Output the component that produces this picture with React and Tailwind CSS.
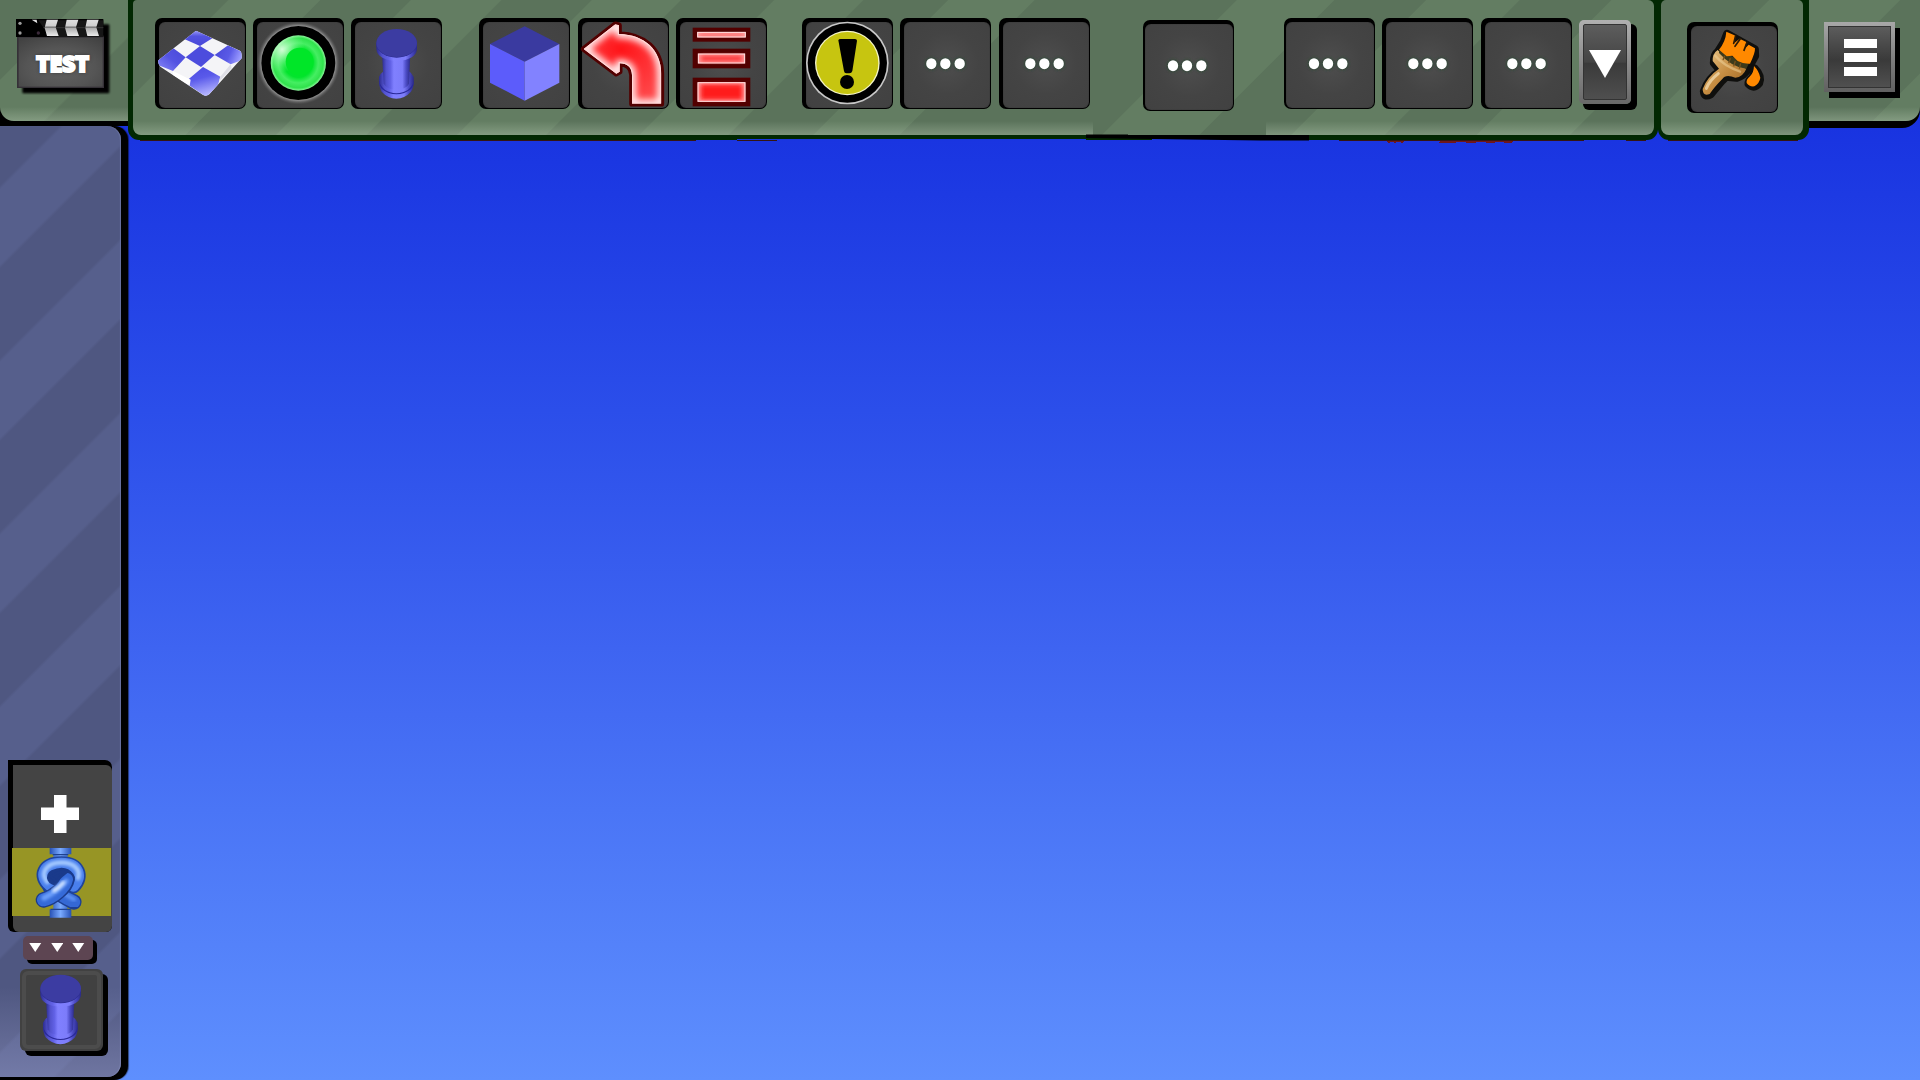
import React from "react";

function Tile({ children, thin = false, className = "" }) {
  return (
    <div
      className={`relative h-[91px] w-[91px] shrink-0 rounded-[7px] bg-black pr-px pb-px pt-[4px] ${thin ? "pl-[2px]" : "pl-[4px]"} ${className}`}
    >
      <div className="h-full w-full rounded-[6px] bg-[radial-gradient(circle_at_50%_48%,#4e4e4e_0%,#444_50%,#414141_100%)] shadow-[inset_0_0_1px_#222]" />
      <div className="absolute inset-0">{children}</div>
    </div>
  );
}

function Dots({ shift = 0 }) {
  return (
    <svg viewBox="0 0 273 273" className="h-full w-full">
      <defs>
        <filter id="dotGlow" x="-50%" y="-50%" width="200%" height="200%">
          <feGaussianBlur stdDeviation="4" />
        </filter>
      </defs>
      <g transform={`translate(${shift} 0)`}>
        <g fill="#2c4a35" filter="url(#dotGlow)">
          <circle cx="94" cy="137" r="18" />
          <circle cx="136" cy="137" r="18" />
          <circle cx="179" cy="137" r="18" />
        </g>
        <g fill="#fff">
          <ellipse cx="94" cy="137" rx="15.5" ry="16.5" />
          <ellipse cx="136" cy="137" rx="15.5" ry="16.5" />
          <ellipse cx="179" cy="137" rx="15.5" ry="16.5" />
        </g>
      </g>
    </svg>
  );
}

function Checker() {
  return (
    <svg viewBox="465 55 273 273" className="h-full w-full">
      <defs>
        <clipPath id="checkerClip">
          <path d="M588 93 L720 153 Q726 157 725 176 L628 284 Q618 292 608 285 L481 201 Q473 193 475 182 Z" />
        </clipPath>
        <linearGradient id="chFront" x1="0" y1="0" x2="0.3" y2="1">
          <stop offset="0" stopColor="#4a4ae0" />
          <stop offset="0.45" stopColor="#5a5aea" />
          <stop offset="1" stopColor="#b4b4ff" />
        </linearGradient>
        <linearGradient id="chLeft" x1="0" y1="1" x2="1" y2="0">
          <stop offset="0" stopColor="#8c8cfa" />
          <stop offset="0.5" stopColor="#5454e2" />
          <stop offset="1" stopColor="#4848d8" />
        </linearGradient>
        <linearGradient id="chRight" x1="0" y1="0" x2="1" y2="0.3">
          <stop offset="0" stopColor="#4848d8" />
          <stop offset="0.6" stopColor="#5a5ae6" />
          <stop offset="1" stopColor="#9c9cff" />
        </linearGradient>
        <linearGradient id="chTop" x1="0" y1="1" x2="0" y2="0">
          <stop offset="0" stopColor="#4848d8" />
          <stop offset="0.6" stopColor="#5353e0" />
          <stop offset="1" stopColor="#a4a4fb" />
        </linearGradient>
      </defs>
      <g clipPath="url(#checkerClip)">
        <rect x="465" y="85" width="270" height="210" fill="#f4f4f7" />
        <path d="M588 90 L637 116 L600 139 L551 117Z" fill="url(#chTop)" />
        <path d="M600 139 L644 166 L603 202 L557 173Z" fill="#4c4cdd" />
        <path d="M684 137 L730 158 L726 181 L692 194 L644 166Z" fill="url(#chRight)" />
        <path d="M516 143 L557 173 L519 214 L470 194 L473 182Z" fill="url(#chLeft)" />
        <path d="M609 202 L661 231 L652 262 L618 292 L563 254 L569 236Z" fill="url(#chFront)" />
        <path d="M519 214 L572 240 L569 258 L518 226Z" fill="#fff" />
        <path d="M661 231 L692 194 L695 206 L657 246Z" fill="#dedee6" />
      </g>
    </svg>
  );
}

function GreenBall() {
  return (
    <svg viewBox="760 55 273 273" className="h-full w-full">
      <defs>
        <radialGradient id="ballHalo">
          <stop offset="0.86" stopColor="#b5b5b5" />
          <stop offset="0.91" stopColor="#8d8d8d" stopOpacity="0.75" />
          <stop offset="1" stopColor="#555" stopOpacity="0" />
        </radialGradient>
        <radialGradient id="ball" cx="0.5" cy="0.5" r="0.5">
          <stop offset="0" stopColor="#00e52c" />
          <stop offset="0.52" stopColor="#02e42c" />
          <stop offset="0.72" stopColor="#45ee62" />
          <stop offset="0.9" stopColor="#30e24c" />
          <stop offset="1" stopColor="#8df59c" />
        </radialGradient>
        <radialGradient id="ballShine" cx="0.2" cy="0.25" r="0.42">
          <stop offset="0" stopColor="#e4ffe6" stopOpacity="0.9" />
          <stop offset="1" stopColor="#8fffa0" stopOpacity="0" />
        </radialGradient>
      </defs>
      <circle cx="896" cy="190" r="125" fill="url(#ballHalo)" />
      <circle cx="896" cy="190" r="111" fill="#000" />
      <circle cx="896" cy="190" r="83" fill="url(#ball)" />
      <circle cx="896" cy="190" r="82" fill="url(#ballShine)" />
      <circle cx="900" cy="186" r="42" fill="#00e628" />
    </svg>
  );
}

function Bumper({ box }) {
  return (
    <svg viewBox={box} className="h-full w-full">
      <defs>
        <linearGradient id="bumpBody" x1="0" x2="1">
          <stop offset="0" stopColor="#2c2c8e" />
          <stop offset="0.15" stopColor="#5252ce" />
          <stop offset="0.3" stopColor="#6262e6" />
          <stop offset="0.42" stopColor="#8080ff" />
          <stop offset="0.72" stopColor="#7c7cfa" />
          <stop offset="0.85" stopColor="#4c4cc6" />
          <stop offset="1" stopColor="#2a2a88" />
        </linearGradient>
      </defs>
      <path d="M1139 232 Q1137 260 1147 276 Q1165 296 1191 297 Q1217 296 1235 276 Q1246 260 1243 232 Q1236 218 1228 214 L1154 214 Q1144 220 1139 232Z" fill="url(#bumpBody)" />
      <path d="M1139 244 Q1150 279 1191 281 Q1233 279 1244 244 Q1242 262 1234 269 Q1216 284 1191 284 Q1166 284 1149 269 Q1141 262 1139 244Z" fill="#29299a" />
      <path d="M1148 160 H1233 L1229 252 Q1222 268 1191 270 Q1160 268 1153 252Z" fill="url(#bumpBody)" />
      <path d="M1131 130 V148 Q1134 181 1192 184 Q1250 181 1253 148 V130Z" fill="url(#bumpBody)" />
      <ellipse cx="1192" cy="132" rx="61" ry="42" fill="#2d2d92" />
      <ellipse cx="1192" cy="130" rx="61" ry="42" fill="#3c3ca2" />
    </svg>
  );
}

function Cube() {
  return (
    <svg viewBox="90 55 273 273" className="h-full w-full">
      <path d="M227 80 L331 133 L227 186 L123 133Z" fill="#3a3aa0" />
      <path d="M123 133 L227 186 V303 L123 249Z" fill="#5c5cfb" />
      <path d="M331 133 L227 186 V303 L331 249Z" fill="#8282ff" />
    </svg>
  );
}

function TurnArrow() {
  const d = "M402 148 L497 74 L508 77 V103 C585 105 634 150 635 222 V312 H547 V226 C546 202 533 192 510 191 V216 L500 222 Z";
  return (
    <svg viewBox="385 55 273 273" className="h-full w-full overflow-visible">
      <defs>
        <clipPath id="arrowClip"><path d={d} /></clipPath>
        <filter id="arrowBlur" x="-20%" y="-20%" width="140%" height="140%">
          <feGaussianBlur stdDeviation="11" />
        </filter>
        <radialGradient id="arrowRed" gradientUnits="userSpaceOnUse" cx="515" cy="150" r="190">
          <stop offset="0" stopColor="#ff1418" />
          <stop offset="0.45" stopColor="#ff3034" />
          <stop offset="1" stopColor="#ff5052" />
        </radialGradient>
      </defs>
      <path d={d} fill="#520000" stroke="#520000" strokeWidth="17" strokeLinejoin="round" />
      <g clipPath="url(#arrowClip)">
        <path d={d} fill="url(#arrowRed)" />
        <path d={d} fill="none" stroke="#fff" strokeWidth="22" filter="url(#arrowBlur)" />
        <path d={d} fill="none" stroke="#ffd9d9" strokeWidth="6" />
      </g>
    </svg>
  );
}

function RedBars() {
  const bars = [
    [730, 84, 173, 42, 14, "#ff4c4e"],
    [730, 147, 173, 59, 16, "#ff3034"],
    [730, 234, 173, 86, 15, "#ff1a1e"],
  ];
  return (
    <svg viewBox="680 55 273 273" className="h-full w-full">
      <defs>
        <filter id="barBlur" x="-10%" y="-60%" width="120%" height="220%">
          <feGaussianBlur stdDeviation="6" />
        </filter>
      </defs>
      {bars.map(([x, y, w, h, p, c], i) => (
        <g key={i}>
          <rect x={x} y={y} width={w} height={h} fill="#520000" />
          <rect x={x + p} y={y + p - 1} width={w - 2 * p} height={h - 2 * p + 2} fill="#ff9c9c" />
          <rect x={x + p + 9} y={y + p + 5} width={w - 2 * p - 18} height={Math.max(6, h - 2 * p - 10)} fill={c} filter="url(#barBlur)" />
          <rect x={x + p + 1} y={y + p} width={w - 2 * p - 2} height={h - 2 * p} fill="none" stroke="#ffe1e1" strokeWidth="3" />
        </g>
      ))}
    </svg>
  );
}

function Alert() {
  return (
    <svg viewBox="1058 55 273 273" className="h-full w-full">
      <circle cx="1194" cy="190" r="124" fill="#c8c8c8" />
      <circle cx="1194" cy="190" r="119" fill="#000" />
      <circle cx="1194" cy="190" r="97" fill="#f5f5c8" />
      <circle cx="1194" cy="190" r="93" fill="#c7c510" />
      <path d="M1167 122 Q1168 118 1174 118 H1217 Q1223 118 1223 123 L1209 214 Q1207 221 1200 221 H1191 Q1185 221 1184 214Z" fill="#000" />
      <circle cx="1193" cy="247" r="21" fill="#000" />
    </svg>
  );
}

function Brush() {
  return (
    <svg viewBox="200 67 273 273" className="h-full w-full">
      <defs>
        <linearGradient id="wood" x1="0" y1="0" x2="1" y2="1">
          <stop offset="0" stopColor="#e8c88c" />
          <stop offset="0.5" stopColor="#c68d42" />
          <stop offset="1" stopColor="#98601e" />
        </linearGradient>
        <filter id="woodSoft"><feGaussianBlur stdDeviation="2" /></filter>
      </defs>
      <g stroke="#0f0f0d" strokeWidth="23" strokeLinejoin="round" fill="#0f0f0d" transform="translate(1 3)">
        <path d="M319 99 L403 145 L404 166 L382 206 Q370 226 348 232 L316 229 L305 240 L270 282 Q250 292 249 272 Q262 232 298 210 L279 187 Q278 162 292 152 L309 125Z" />
        <path d="M402 203 Q425 226 416 248 Q399 268 383 250 Q382 240 396 229Z" />
      </g>
      <path d="M292 151 Q276 162 277 184 L296 207 Q260 232 247 268 Q247 291 268 283 Q282 262 306 238 Q316 222 345 234 Q368 232 378 207 L330 186Z" fill="url(#wood)" />
      <path d="M283 166 Q308 198 362 217" fill="none" stroke="#efd198" strokeWidth="7" opacity="0.55" filter="url(#woodSoft)" />
      <path d="M258 266 Q268 242 294 222" fill="none" stroke="#f7e2b8" strokeWidth="9" strokeLinecap="round" opacity="0.7" filter="url(#woodSoft)" />
      <path d="M296 152 L330 168 L385 193 L378 207 Q335 204 296 160Z" fill="#3d3a1a" />
      <path d="M318 96 L346 108 L341 131 L358 117 L378 127 L373 147 L385 135 L404 146 Q405 160 389 192 Q372 194 352 184 L336 168 L319 170 L296 150 Q316 125 318 96Z" fill="#ff8900" />
      <path d="M346 107 L340 131 M360 117 L344 140 M380 128 L371 152" stroke="#2a1a06" strokeWidth="5" strokeLinecap="round" />
      <path d="M313 168 L308 181 M330 176 L325 191 M345 184 L340 200 M361 191 L357 207" stroke="#75511c" strokeWidth="4" />
      <path d="M401 199 Q400 220 389 230 Q377 240 379 250 Q387 262 402 260 Q418 250 420 234 Q416 214 401 199Z" fill="#ff8900" />
    </svg>
  );
}

function Clapper() {
  return (
    <svg viewBox="42 52 294 234" className="h-[78px] w-[98px]">
      <defs>
        <radialGradient id="slate" cx="0.5" cy="0.62" r="0.75">
          <stop offset="0" stopColor="#626262" />
          <stop offset="0.55" stopColor="#555" />
          <stop offset="1" stopColor="#424242" />
        </radialGradient>
        <linearGradient id="slat" x1="0" y1="0" x2="0" y2="1">
          <stop offset="0" stopColor="#e0e0e0" />
          <stop offset="0.38" stopColor="#cfcfcf" />
          <stop offset="0.46" stopColor="#6a6a6a" />
          <stop offset="0.54" stopColor="#b0b0b0" />
          <stop offset="1" stopColor="#ececec" />
        </linearGradient>
        <filter id="soft"><feGaussianBlur stdDeviation="2.5" /></filter>
      </defs>
      <rect x="67" y="74" width="261" height="207" rx="3" fill="#000" filter="url(#soft)" />
      <rect x="51" y="108" width="261" height="157" fill="#353137" />
      <rect x="56" y="114" width="252" height="147" fill="url(#slate)" />
      <rect x="48" y="58" width="262" height="54" fill="#000" />
      <path d="M115 62 H310 V112 H150 Z" fill="#161616" />
      <path d="M130 84 H310" stroke="#333" strokeWidth="3" />
      <g fill="url(#slat)">
        <path d="M140 60 H174 L167 83 L176 109 H141 L134 84Z" />
        <path d="M200 60 H235 L228 83 L237 109 H202 L195 84Z" />
        <path d="M261 60 H296 L289 83 L297 109 H262 L256 84Z" />
      </g>
      <path d="M95 60 H110 L112 71Z" fill="#e0e0e0" />
      <g fill="#9a9a9a">
        <circle cx="60" cy="71" r="5" />
        <circle cx="60" cy="100" r="5" />
      </g>
      <circle cx="115" cy="100" r="5" fill="#3b2a3a" />
    </svg>
  );
}

function Knot() {
  return (
    <svg viewBox="36 324 297 216" className="h-[72px] w-[99px] overflow-visible">
      <defs>
        <linearGradient id="rope" x1="0" x2="1">
          <stop offset="0" stopColor="#2650b4" />
          <stop offset="0.5" stopColor="#7aabff" />
          <stop offset="1" stopColor="#2650b4" />
        </linearGradient>
        <filter id="ropeSoft" x="-30%" y="-30%" width="160%" height="160%"><feGaussianBlur stdDeviation="5" /></filter>
        <filter id="ropeEdge" x="-30%" y="-30%" width="160%" height="160%"><feGaussianBlur stdDeviation="2" /></filter>
      </defs>
      <path d="M149 324 H214 V343 H203 V360 H160 V343 H149Z" fill="url(#rope)" />
      <path d="M160 480 H202 V508 H214 V533 H149 V508 H160Z" fill="url(#rope)" />
      <path d="M158 344 H205 M152 508 H212" stroke="#1f4290" strokeWidth="4" />
      <g fill="none" strokeLinecap="round" strokeLinejoin="round">
        <path d="M222 486 Q176 464 150 440" stroke="#1d3f93" strokeWidth="46" />
        <path d="M222 486 Q176 464 150 440" stroke="#3467d4" strokeWidth="37" filter="url(#ropeEdge)" />
        <path d="M222 478 Q200 468 180 452" stroke="#5f93f5" strokeWidth="12" filter="url(#ropeSoft)" />
        <path d="M150 436 C116 408 132 371 184 371 C236 371 248 410 220 438" stroke="#1f449c" strokeWidth="45" />
        <path d="M150 436 C116 408 132 371 184 371 C236 371 248 410 220 438" stroke="#4a7fec" strokeWidth="35" filter="url(#ropeEdge)" />
        <path d="M142 426 C118 398 140 368 184 368 C226 368 242 392 234 414" stroke="#a6caff" strokeWidth="14" filter="url(#ropeSoft)" />
        <path d="M164 412 Q190 400 202 416 Q198 438 174 456 Q154 474 130 480" stroke="#1a3a8b" strokeWidth="46" />
        <path d="M200 418 Q196 438 174 456 Q154 474 130 480" stroke="#356ad8" strokeWidth="38" filter="url(#ropeEdge)" />
        <path d="M153 410 Q176 392 200 396 Q184 408 168 424 Z" fill="#1a3a8b" stroke="#1a3a8b" strokeWidth="8" />
        <path d="M198 424 Q172 454 132 474" stroke="#6c9ffb" strokeWidth="16" filter="url(#ropeSoft)" />
        <path d="M190 428 Q176 444 162 452" stroke="#d8e8ff" strokeWidth="11" filter="url(#ropeSoft)" />
      </g>
    </svg>
  );
}

const glow = "bg-[linear-gradient(to_top,rgba(205,225,200,0.30),rgba(205,225,200,0)_100%)]";

function LeftPanel() {
  return (
    <div className="h-[126px] w-[128px] shrink-0 bg-black">
      <div className="flex h-[121px] flex-col justify-between overflow-hidden rounded-bl-[14px] bg-[linear-gradient(135deg,#5b735b_0px,#5b735b_56px,#637d62_57px,#637d62_116px,#5b735b_118px)]">
        <div className="relative ml-[14px] mt-[17px] h-[78px] w-[98px]">
          <Clapper />
          <span className="absolute left-[22px] top-[29px] font-['Open_Sans',sans-serif] text-[23.5px] leading-[34px] font-extrabold tracking-[-0.4px] text-white [-webkit-text-stroke:1.8px_white] [text-shadow:0_0_4px_#222]">
            TEST
          </span>
        </div>
        <div className={`h-[14px] ${glow}`} />
      </div>
    </div>
  );
}

function MainPanel() {
  return (
    <div className="relative h-[140px] w-[1530px] shrink-0 overflow-hidden rounded-b-[11px] border-b-[5px] border-l-[5px] border-r-[4px] border-[#022802] bg-[#022802]">
      <div className="relative h-[135px] overflow-hidden rounded-b-[8px] rounded-tl-[4px] rounded-tr-[6px] bg-[linear-gradient(135deg,#5b735b_67px,#637d62_68px,#637d62_132px,#5b735b_133px,#5b735b_196px,#637d62_197px,#637d62_260px,#5b735b_261px,#5b735b_324px,#637d62_325px,#637d62_387px,#5b735b_388px,#5b735b_453px,#637d62_454px,#637d62_516px,#5b735b_517px,#5b735b_576px,#637d62_577px,#637d62_637px,#5b735b_638px,#5b735b_780px,#637d62_781px,#637d62_849px,#5b735b_850px,#5b735b_914px,#637d62_915px,#637d62_980px,#5b735b_981px,#5b735b_1045px,#637d62_1046px,#637d62_1111px,#5b735b_1112px)]">
        <div className="absolute bottom-0 left-0 right-0 flex h-[14px]">
          <div className={`w-[960px] ${glow}`} />
          <div className="w-[173px]" />
          <div className={`flex-1 ${glow}`} />
        </div>
        <div className="relative flex items-start pl-[21.5px] pt-[18px]">
          <div className="flex gap-[7.4px]">
            <Tile><Checker /></Tile>
            <Tile><GreenBall /></Tile>
            <Tile><Bumper box="1055 55 273 273" /></Tile>
          </div>
          <div className="ml-[37px] flex gap-[7.4px]">
            <Tile><Cube /></Tile>
            <Tile><TurnArrow /></Tile>
            <Tile><RedBars /></Tile>
          </div>
          <div className="ml-[34.7px] flex gap-[7.4px]">
            <Tile><Alert /></Tile>
            <Tile><Dots /></Tile>
            <Tile><Dots /></Tile>
          </div>
          <Tile thin className="ml-[53px] mt-[2px]"><Dots shift={-4} /></Tile>
          <Tile thin className="ml-[50px]"><Dots shift={-4} /></Tile>
          <div className="ml-[7.8px] flex gap-[7.4px]">
            <Tile><Dots /></Tile>
            <Tile><Dots /></Tile>
          </div>
          <div className="ml-[7.7px] mt-[2px] flex h-[84px] w-[52px] items-center justify-center rounded-[5px] bg-[linear-gradient(#b0b0b0,#8c8c8c_50%,#686868)] p-[4px] shadow-[5px_5px_0_1px_#000]">
            <div className="flex h-full w-full items-center justify-center rounded-[2px] border border-[#333] bg-[linear-gradient(#5d5d5d,#444_50%,#3a3a3a_52%,#4f4f4f)]">
              <svg viewBox="0 0 32 28" className="mt-[3px] h-[28px] w-[32px] shrink-0 fill-white">
                <path d="M0 0H32L16 28Z" />
              </svg>
            </div>
          </div>
        </div>
      </div>
    </div>
  );
}

function BrushPanel() {
  return (
    <div className="h-[140px] w-[151px] shrink-0 rounded-b-[11px] border-b-[5px] border-l-[3px] border-r-[6px] border-[#022802] bg-[#022802]">
      <div className="relative h-[135px] overflow-hidden rounded-b-[8px] rounded-t-[5px] bg-[linear-gradient(135deg,#5b735b_76px,#637d62_77px,#637d62_131px,#5b735b_132px)]">
        <Tile className="ml-[25.5px] mt-[22px]"><Brush /></Tile>
        <div className={`absolute bottom-0 h-[14px] w-full ${glow}`} />
      </div>
    </div>
  );
}

function MenuPanel() {
  return (
    <div className="h-[128px] flex-1 rounded-br-[18px] bg-black">
      <div className="flex h-[121px] flex-col justify-between overflow-hidden rounded-br-[14px] bg-[linear-gradient(135deg,#637d62_64px,#5b735b_65px,#5b735b_130px,#637d62_131px)]">
        <div className="ml-[15px] mt-[22px] h-[70px] w-[71px] bg-[linear-gradient(#a8a8a8,#808080_50%,#606060)] p-[4px] shadow-[5px_6px_0_0_#000]">
          <div className="flex h-full w-full flex-col items-center justify-center gap-[5px] border border-[#333] bg-[linear-gradient(#5c5c5c,#3a3a3a_55%,#505050)]">
            <div className="ml-[1px] h-[9px] w-[33px] bg-white" />
            <div className="ml-[1px] h-[9px] w-[33px] bg-white" />
            <div className="ml-[1px] h-[9px] w-[33px] bg-white" />
          </div>
        </div>
        <div className={`h-[14px] ${glow}`} />
      </div>
    </div>
  );
}

function Sidebar() {
  return (
    <aside className="-mt-[14px] h-[954px] w-[128px] rounded-r-[14px] bg-black shadow-[1px_0_1px_rgba(0,0,0,0.5)]">
      <div className="relative flex h-[951px] w-[121px] flex-col overflow-hidden rounded-r-[14px] bg-[repeating-linear-gradient(135deg,#4f5781_0px,#4f5781_42px,#565f8c_45px,#565f8c_98px,#4f5781_101px,#4f5781_122.3px)] shadow-[inset_-1px_0_1px_#6a73a0]">
        <div className="absolute bottom-0 h-[90px] w-full bg-[linear-gradient(to_top,rgba(150,155,200,0.45),rgba(150,155,200,0))]" />
        <div className="relative ml-[8px] mt-[634px] h-[172px] w-[104px] rounded-tr-[7px] rounded-br-[6px] rounded-bl-[6px] bg-black pl-[5px] pt-[5px]">
          <div className="flex h-[167px] w-[98.5px] flex-col items-center rounded-r-[6px] rounded-bl-[6px] bg-[#444]">
            <svg viewBox="0 0 38 38" className="mr-[5px] mt-[30px] h-[38px] w-[38px] fill-white">
              <path d="M13 0H25.5V12.5H38V25H25.5V38H13V25H0V12.5H13Z" />
            </svg>
            <div className="mt-[15px] -ml-[2px] h-[68px] w-[99px] bg-[#979525]">
              <Knot />
            </div>
          </div>
        </div>
        <div className="relative ml-[23px] mt-[3.5px] flex h-[24px] w-[70px] shrink-0 items-center justify-center gap-[9px] rounded-[5px] bg-[#5d4552] pr-[2px] pb-[1px] shadow-[4px_4px_0_0_#000]">
          {[0, 1, 2].map((i) => (
            <svg key={i} viewBox="0 0 12 9" className="h-[9px] w-[12.5px] fill-white">
              <path d="M0 0H12L6 9Z" />
            </svg>
          ))}
        </div>
        <div className="relative ml-[20px] mt-[9px] h-[82px] w-[83px] shrink-0 rounded-[6px] bg-[#414141] shadow-[5px_5px_0_0_#000]">
          <div className="absolute inset-[2px] rounded-[6px] border-[4px] border-[#4c4c4c]" />
          <div className="absolute -left-[4px] -top-[4px] h-[91px] w-[91px]">
            <Bumper box="1058 59 273 273" />
          </div>
        </div>
      </div>
    </aside>
  );
}

export default function App() {
  return (
    <div className="relative h-[1080px] w-[1920px] overflow-hidden bg-[linear-gradient(#1832e0_10%,#1b37e2_15%,#2b4eea_38%,#3e64f1_60%,#4a75f6_75%,#5e8ffe_100%)] font-['Open_Sans',sans-serif]">
      <header className="relative z-10 flex h-[140px] items-start">
        <LeftPanel />
        <MainPanel />
        <BrushPanel />
        <MenuPanel />
      </header>
      <Sidebar />
      <svg viewBox="0 130 1920 16" className="pointer-events-none absolute left-0 top-[130px] z-20 h-[16px] w-[1920px]">
        <path d="M695 140h42v-1h48v1h-90z M785 139h301v1h-301z M1152 139h84v1h-84z" fill="#1a35e0" />
        <path d="M1086 134.5H1128V135H1309V140.5L1260 140.5L1152 139L1086 138Z" fill="#000" />
        <path d="M140 140h556v1h-556z M737 140h40v1h-40z M1339 140h245v1h-245z M1626 140h20v1h-20z M1668 140h130v1h-130z" fill="#351512" />
        <path d="M1387 141h17v1h-17z M1388 142h2v1h-2z M1394 142h2v1h-2z M1401 142h2v1h-2z M1440 141h73v1h-73z M1439 142h17v1h-17z M1466 142h10v1h-10z M1486 142h9v1h-9z M1504 142h8v1h-8z" fill="#6e171c" />
      </svg>
    </div>
  );
}
